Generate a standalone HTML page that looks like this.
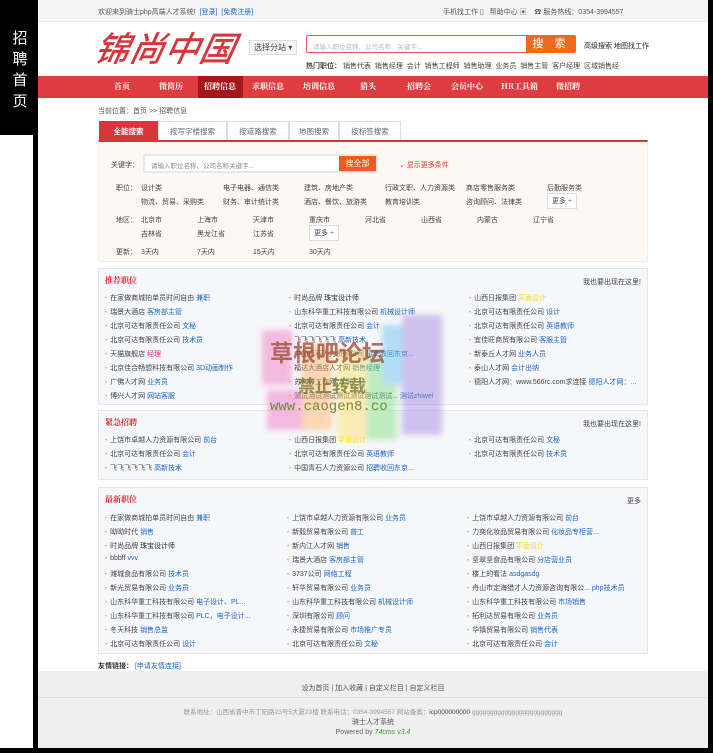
<!DOCTYPE html>
<html><head><meta charset="utf-8">
<style>
*{margin:0;padding:0;box-sizing:border-box}
body{width:713px;height:753px;background:#000;font-family:"Liberation Sans","Noto Sans CJK SC",sans-serif;font-size:7px;color:#444;position:relative;overflow:hidden}
.abs{position:absolute;white-space:nowrap}
a{color:#1a66c0;text-decoration:none}
#page{position:absolute;left:38px;top:0;width:670px;height:748px;background:#fff}
#leftw{position:absolute;left:0;top:135px;width:33px;height:613px;background:#fff}
#side{position:absolute;left:10px;top:28px;color:#fff;font-size:15px;line-height:21px;width:20px;text-align:center}
.top{position:absolute;left:0;top:0;width:670px;height:22px;background:#f5f5f5;border-bottom:1px solid #e8e8e8}
.nav{position:absolute;left:0;top:76px;width:670px;height:22px;background:#df3b40}
.nav span{position:absolute;top:0;line-height:22px;color:#fff;font-weight:bold;font-size:8px;font-family:"Noto Serif CJK SC",serif}
.box{position:absolute;left:60px;width:550px;background:#f6f7fa;border:1px solid #e4e6ea}
.box h3{position:absolute;left:6px;top:6px;color:#d6282c;font-size:8px;font-family:"Noto Serif CJK SC",serif}
.li{position:absolute;white-space:nowrap;color:#444}
.li:before{content:"•";color:#f0b030;margin-right:3px;font-size:6px}
.y{color:#f4e400}
.tab{position:absolute;top:121px;height:19px;line-height:19px;border:1px solid #ddd;border-bottom:none;background:#fff;text-align:center;color:#666;font-size:7.5px}
</style></head><body>
<div id="leftw"></div>
<div id="side">招<br>聘<br>首<br>页</div>
<div id="page">
 <div class="top">
  <span class="abs" style="left:60px;top:7px;color:#555">欢迎来到骑士php高端人才系统! &nbsp;<a>[登录]</a> &nbsp;<a>[免费注册]</a></span>
  <span class="abs" style="left:405px;top:7px;color:#555">手机找工作 ▯ &nbsp; 帮助中心 ▣ &nbsp;&nbsp; ☎ 服务热线：0354-3994557</span>
 </div>
 <div class="abs" style="left:58px;top:27px;font-size:34px;color:#d7363b;font-style:italic;font-weight:normal;letter-spacing:1px;font-family:'Noto Sans CJK SC',sans-serif;transform:skewX(-12deg);line-height:40px;-webkit-text-stroke:0.6px #d7363b">锦尚中国</div>
 <div class="abs" style="left:211px;top:40px;width:48px;height:15px;border:1px solid #ddd;background:#f6f6f6;line-height:13px;padding-left:4px;font-size:8px;color:#444">选择分站 ▾</div>
 <div class="abs" style="left:268px;top:35px;width:270px;height:18px;border:1px solid #e55;border-radius:2px;background:#fff;"><span style="position:absolute;left:6px;top:5px;color:#bbb;font-size:6.5px">请输入职位名称、公司名称、关键字...</span><div style="position:absolute;right:-1px;top:-1px;width:50px;height:18px;background:#f06a1b;border-radius:0 2px 2px 0;color:#fff;font-size:11px;line-height:18px;text-align:center;letter-spacing:4px">搜 索</div></div>
 <span class="abs" style="left:546px;top:41px;color:#222">高级搜索 地图找工作</span>
 <span class="abs" style="left:268px;top:61px;color:#444"><b>热门职位：</b> 销售代表 &nbsp;销售经理 &nbsp;会计 &nbsp;销售工程师 &nbsp;销售助理 &nbsp;业务员 &nbsp;销售主管 &nbsp;客户经理 &nbsp;区域销售经</span>
 <div class="nav">
  <div style="position:absolute;left:160px;top:0;width:45px;height:22px;background:#a5171b"></div>
  <span style="left:76px">首页</span><span style="left:121px">微简历</span><span style="left:166px">招聘信息</span><span style="left:214px">求职信息</span><span style="left:265px">培训信息</span><span style="left:322px">猎头</span><span style="left:369px">招聘会</span><span style="left:413px">会员中心</span><span style="left:463px">HR工具箱</span><span style="left:518px">微招聘</span>
 </div>
 <span class="abs" style="left:60px;top:106px;color:#555">当前位置：首页 &gt;&gt; 招聘信息</span>
 <div class="tab" style="left:61px;width:59px;background:#d8363a;color:#fff;border-color:#d8363a;font-weight:bold">全能搜索</div>
 <div class="tab" style="left:120px;width:69px">按写字楼搜索</div>
 <div class="tab" style="left:189px;width:62px">按道路搜索</div>
 <div class="tab" style="left:251px;width:50px">地图搜索</div>
 <div class="tab" style="left:301px;width:62px">按标签搜索</div>
 <div class="abs" style="left:60px;top:140px;width:550px;height:122px;background:#fdf8f1;border:1px solid #eee;border-top:2px solid #d8363a"></div>
 <span class="abs" style="left:73px;top:160px">关键字：</span>
 <div class="abs" style="left:105px;top:154px;width:235px;height:19px;background:#e8e8e8;padding:2px"><div style="width:194px;height:15px;background:#fff;color:#888;padding:4px 0 0 6px;font-size:6.5px">请输入职位名称、公司名称关键字...</div><div style="position:absolute;left:196px;top:2px;width:37px;height:15px;background:#f05a1a;color:#fff;text-align:center;line-height:15px;font-size:8px">搜全部</div></div>
 <span class="abs" style="left:361px;top:160px;color:#d33">⌄ 显示更多条件</span>
 <span class="abs" style="left:78px;top:183px">职位：</span>
 <span class="abs" style="left:103px;top:183px">设计类</span><span class="abs" style="left:185px;top:183px">电子电器、通信类</span><span class="abs" style="left:266px;top:183px">建筑、房地产类</span><span class="abs" style="left:347px;top:183px">行政文职、人力资源类</span><span class="abs" style="left:428px;top:183px">商店零售服务类</span><span class="abs" style="left:509px;top:183px">后勤服务类</span>
 <span class="abs" style="left:103px;top:197px">物流、贸易、采购类</span><span class="abs" style="left:185px;top:197px">财务、审计统计类</span><span class="abs" style="left:266px;top:197px">酒店、餐饮、旅游类</span><span class="abs" style="left:347px;top:197px">教育培训类</span><span class="abs" style="left:428px;top:197px">咨询顾问、法律类</span>
 <span class="abs" style="left:509px;top:193px;border:1px solid #ddd;background:#fff;padding:2px 4px">更多 ÷</span>
 <span class="abs" style="left:78px;top:215px">地区：</span>
 <span class="abs" style="left:103px;top:215px">北京市</span><span class="abs" style="left:159px;top:215px">上海市</span><span class="abs" style="left:215px;top:215px">天津市</span><span class="abs" style="left:271px;top:215px">重庆市</span><span class="abs" style="left:327px;top:215px">河北省</span><span class="abs" style="left:383px;top:215px">山西省</span><span class="abs" style="left:439px;top:215px">内蒙古</span><span class="abs" style="left:495px;top:215px">辽宁省</span>
 <span class="abs" style="left:103px;top:229px">吉林省</span><span class="abs" style="left:159px;top:229px">黑龙江省</span><span class="abs" style="left:215px;top:229px">江苏省</span>
 <span class="abs" style="left:271px;top:225px;border:1px solid #ddd;background:#fff;padding:2px 4px">更多 ÷</span>
 <span class="abs" style="left:78px;top:247px">更新：</span><span class="abs" style="left:103px;top:247px">3天内</span><span class="abs" style="left:159px;top:247px">7天内</span><span class="abs" style="left:215px;top:247px">15天内</span><span class="abs" style="left:271px;top:247px">30天内</span>

 <div class="box" style="top:268px;height:137px"><h3>推荐职位</h3><span class="abs" style="right:6px;top:8px">我也要出现在这里!</span>
  <span class="li" style="left:6px;top:24px">在家做商城拍单员时间自由 <a>兼职</a></span>
  <span class="li" style="left:6px;top:38px">瑞景大酒店 <a>客房部主管</a></span>
  <span class="li" style="left:6px;top:52px">北京可达有限责任公司 <a>文秘</a></span>
  <span class="li" style="left:6px;top:66px">北京可达有限责任公司 <a>技术员</a></span>
  <span class="li" style="left:6px;top:80px">天猫旗舰店 <a style="color:#e0208a">经理</a></span>
  <span class="li" style="left:6px;top:94px">北京佳合畅想科技有限公司 <a>3D动画制作</a></span>
  <span class="li" style="left:6px;top:108px">广佛人才网 <a>业务员</a></span>
  <span class="li" style="left:6px;top:122px">博兴人才网 <a>网站客服</a></span>
  <span class="li" style="left:190px;top:24px">时尚品牌 <a style="color:#223">珠宝设计师</a></span>
  <span class="li" style="left:190px;top:38px">山东科华重工科技有限公司 <a>机械设计师</a></span>
  <span class="li" style="left:190px;top:52px">北京可达有限责任公司 <a>会计</a></span>
  <span class="li" style="left:190px;top:66px">飞飞飞飞飞飞 <a>高新技术</a></span>
  <span class="li" style="left:190px;top:80px">中国青石人力资源公司 <a>招聘收回东京...</a></span>
  <span class="li" style="left:190px;top:94px">福达大酒店人才网 <a>销售经理</a></span>
  <span class="li" style="left:190px;top:108px">苏州好工作网 <a>人事</a></span>
  <span class="li" style="left:190px;top:122px">测试测试测试测试测试测试测试... <a>测试zhiwei</a></span>
  <span class="li" style="left:370px;top:24px">山西日报集团 <a class="y">平面设计</a></span>
  <span class="li" style="left:370px;top:38px">北京可达有限责任公司 <a>设计</a></span>
  <span class="li" style="left:370px;top:52px">北京可达有限责任公司 <a>英语教师</a></span>
  <span class="li" style="left:370px;top:66px">宜佳旺商贸有限公司 <a>客服主管</a></span>
  <span class="li" style="left:370px;top:80px">新泰丘人才网 <a>业务人员</a></span>
  <span class="li" style="left:370px;top:94px">泰山人才网 <a>会计出纳</a></span>
  <span class="li" style="left:370px;top:108px">德阳人才网：www.566rc.com求连接 <a>德阳人才网：...</a></span>
 </div>
 <div class="box" style="top:410px;height:70px"><h3>紧急招聘</h3><span class="abs" style="right:6px;top:8px">我也要出现在这里!</span>
  <span class="li" style="left:6px;top:24px">上饶市卓越人力资源有限公司 <a>前台</a></span>
  <span class="li" style="left:6px;top:38px">北京可达有限责任公司 <a>会计</a></span>
  <span class="li" style="left:6px;top:52px">飞飞飞飞飞飞 <a>高新技术</a></span>
  <span class="li" style="left:190px;top:24px">山西日报集团 <a class="y">平面设计</a></span>
  <span class="li" style="left:190px;top:38px">北京可达有限责任公司 <a>英语教师</a></span>
  <span class="li" style="left:190px;top:52px">中国青石人力资源公司 <a>招聘收回东京...</a></span>
  <span class="li" style="left:370px;top:24px">北京可达有限责任公司 <a>文秘</a></span>
  <span class="li" style="left:370px;top:38px">北京可达有限责任公司 <a>技术员</a></span>
 </div>
 <div class="box" style="top:487px;height:167px"><h3>最新职位</h3><span class="abs" style="right:6px;top:8px">更多</span>
  <span class="li" style="left:6px;top:25px">在家做商城拍单员时间自由 <a>兼职</a></span>
  <span class="li" style="left:6px;top:39px">呦呦时代 <a>销售</a></span>
  <span class="li" style="left:6px;top:53px">时尚品牌 <a style="color:#223">珠宝设计师</a></span>
  <span class="li" style="left:6px;top:67px">bbbff <a>vvv</a></span>
  <span class="li" style="left:6px;top:81px">潍城食品有限公司 <a>技术员</a></span>
  <span class="li" style="left:6px;top:95px">新光贸易有限公司 <a>业务员</a></span>
  <span class="li" style="left:6px;top:109px">山东科华重工科技有限公司 <a>电子设计、PL...</a></span>
  <span class="li" style="left:6px;top:123px">山东科华重工科技有限公司 <a>PLC，电子设计...</a></span>
  <span class="li" style="left:6px;top:137px">冬天科技 <a>销售总监</a></span>
  <span class="li" style="left:6px;top:151px">北京可达有限责任公司 <a>设计</a></span>
  <span class="li" style="left:188px;top:25px">上饶市卓越人力资源有限公司 <a>业务员</a></span>
  <span class="li" style="left:188px;top:39px">新毅贸易有限公司 <a>普工</a></span>
  <span class="li" style="left:188px;top:53px">新内江人才网 <a>销售</a></span>
  <span class="li" style="left:188px;top:67px">瑞景大酒店 <a>客房部主管</a></span>
  <span class="li" style="left:188px;top:81px">3737公司 <a>网络工程</a></span>
  <span class="li" style="left:188px;top:95px">轩华贸易有限公司 <a>业务员</a></span>
  <span class="li" style="left:188px;top:109px">山东科华重工科技有限公司 <a>机械设计师</a></span>
  <span class="li" style="left:188px;top:123px">深圳有限公司 <a>顾问</a></span>
  <span class="li" style="left:188px;top:137px">永捷贸易有限公司 <a>市场推广专员</a></span>
  <span class="li" style="left:188px;top:151px">北京可达有限责任公司 <a>文秘</a></span>
  <span class="li" style="left:368px;top:25px">上饶市卓越人力资源有限公司 <a>前台</a></span>
  <span class="li" style="left:368px;top:39px">力奕化妆品贸易有限公司 <a>化妆品专柜营...</a></span>
  <span class="li" style="left:368px;top:53px">山西日报集团 <a class="y">平面设计</a></span>
  <span class="li" style="left:368px;top:67px">坚翠坚食品有限公司 <a>分店营业员</a></span>
  <span class="li" style="left:368px;top:81px">楼上的看法 <a>asdgasdg</a></span>
  <span class="li" style="left:368px;top:95px">舟山市定海猎才人力资源咨询有限公... <a>php技术员</a></span>
  <span class="li" style="left:368px;top:109px">山东科华重工科技有限公司 <a>市场销售</a></span>
  <span class="li" style="left:368px;top:123px">拓利达贸易有限公司 <a>业务员</a></span>
  <span class="li" style="left:368px;top:137px">华镇贸易有限公司 <a>销售代表</a></span>
  <span class="li" style="left:368px;top:151px">北京可达有限责任公司 <a>会计</a></span>
 </div>
 <span class="abs" style="left:60px;top:661px;color:#333"><b>友情链接：</b> <a>[申请友情连接]</a></span>
 <div class="abs" style="left:0;top:671px;width:670px;height:77px;background:#efefef">
  <div style="position:absolute;left:0;top:26px;width:670px;border-top:1px solid #ddd"></div>
  <div style="position:absolute;top:12px;width:670px;text-align:center;color:#555">设为首页 | 加入收藏 | 自定义栏目 | 自定义栏目</div>
  <div style="position:absolute;top:35px;width:670px;text-align:center;color:#999;font-size:6.5px">联系地址：山西省晋中市丁阳路23号5大厦23楼 联系电话：0354-3994557 网站备案：<span style="color:#444">icp000000000</span> ggggggggggggggggggggggggg</div>
  <div style="position:absolute;top:46px;width:670px;text-align:center;color:#555">骑士人才系统</div>
  <div style="position:absolute;top:58px;width:670px;text-align:center;color:#666">Powered by <i style="color:#4a9a2a">74cms v3.4</i></div>
 </div>
 <div class="abs" style="left:224px;top:315px;width:185px;height:130px;filter:blur(3px);opacity:.45">
  <div style="position:absolute;left:0;top:15px;width:30px;height:55px;background:#f070c0"></div>
  <div style="position:absolute;left:5px;top:75px;width:35px;height:40px;background:#f070c0"></div>
  <div style="position:absolute;left:40px;top:30px;width:30px;height:85px;background:#ffb060"></div>
  <div style="position:absolute;left:75px;top:35px;width:30px;height:90px;background:#ffe060"></div>
  <div style="position:absolute;left:105px;top:40px;width:30px;height:85px;background:#80e080"></div>
  <div style="position:absolute;left:120px;top:10px;width:30px;height:60px;background:#60c0f0"></div>
  <div style="position:absolute;left:140px;top:0;width:40px;height:120px;background:#a080e0"></div>
 </div>
 <span class="abs" style="left:232px;top:334px;font-size:23px;font-weight:bold;color:rgba(160,80,60,.8);font-family:'Noto Sans CJK SC',sans-serif">草根吧论坛</span>
 <span class="abs" style="left:260px;top:372px;font-size:17px;font-weight:bold;color:rgba(110,120,50,.8);font-family:'Noto Sans CJK SC',sans-serif">禁止转载</span>
 <span class="abs" style="left:232px;top:399px;font-size:14px;color:rgba(100,130,40,.9);font-family:'Liberation Mono',monospace">www.caogen8.co</span>
</div>
</body></html>
